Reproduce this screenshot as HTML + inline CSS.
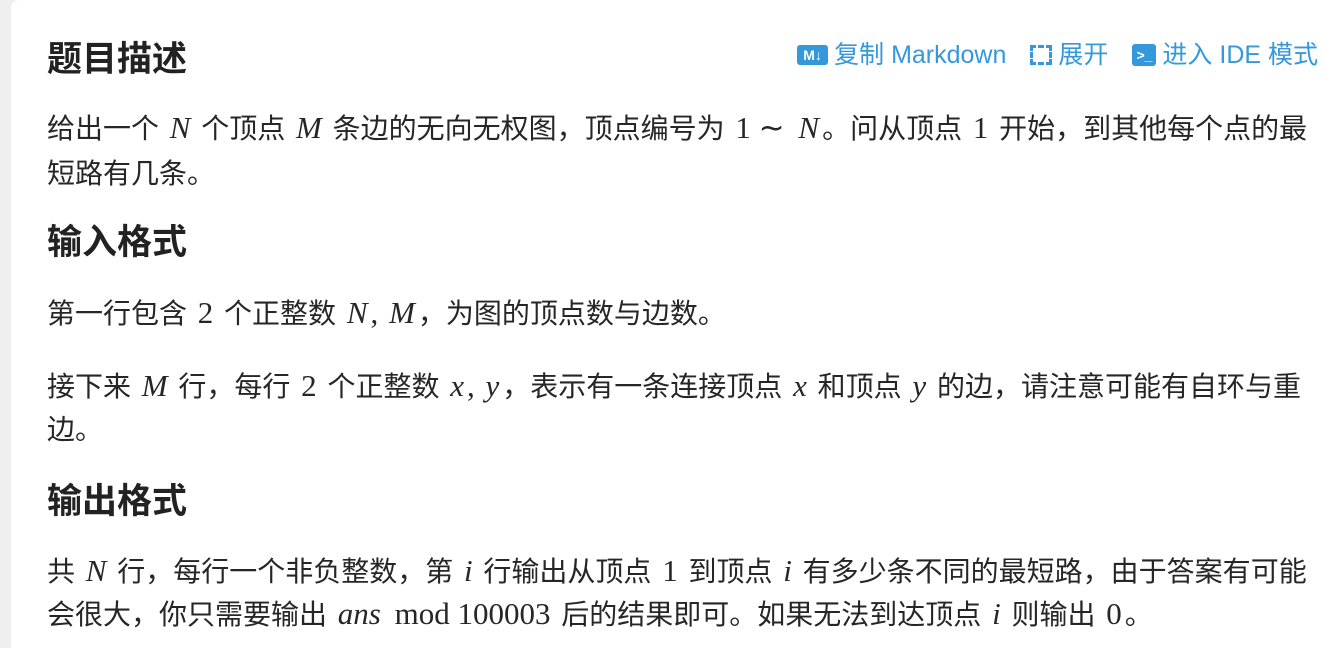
<!DOCTYPE html>
<html><head><meta charset="utf-8"><style>
html,body{margin:0;width:1324px;height:648px;overflow:hidden}
body{background:#efefef;font-family:"Liberation Sans","Noto Sans CJK SC",sans-serif;color:#262626;position:relative}
.card{position:absolute;left:11px;top:0;width:1313px;height:648px;background:#fff;border-radius:8px 0 0 0}
.l{position:absolute;left:47px;font-size:28px;white-space:nowrap;line-height:34px}
.h{position:absolute;left:47px;font-size:35px;font-weight:bold;line-height:40px;color:#222}
i,.m{font-family:"Liberation Serif",serif;font-size:31px;margin:0 3px}
.m{font-style:normal}
.tb{position:absolute;top:40px;right:6px;font-size:25px;color:#3498db;white-space:nowrap;line-height:30px;display:flex;align-items:center}
.tb span{margin-left:24px;display:inline-flex;align-items:center;gap:6px}
.ic{display:inline-block;width:31px;height:20px;background:#3498db;border-radius:3px;color:#fff;font-size:14px;font-weight:bold;text-align:center;line-height:20px}
</style></head><body>
<div class="card"></div>
<div class="h" style="top:40px">题目描述</div>
<div class="tb"><span><b class="ic">M↓</b>复制 Markdown</span><span><b style="display:inline-block;width:22px;height:20px;border:3px dashed #3498db;box-sizing:border-box"></b>展开</span><span><b class="ic" style="width:24px;height:22px;line-height:22px">&gt;_</b>进入 IDE 模式</span></div>
<div class="l" style="top:111px">给出一个 <i>N</i> 个顶点 <i>M</i> 条边的无向无权图，顶点编号为 <span class="m">1 ∼ </span><i>N</i>。问从顶点 <span class="m">1</span> 开始，到其他每个点的最</div>
<div class="l" style="top:157px">短路有几条。</div>
<div class="h" style="top:223px">输入格式</div>
<div class="l" style="top:296px">第一行包含 <span class="m">2</span> 个正整数 <i>N</i><span class="m" style="margin:0">,</span> <i>M</i>，为图的顶点数与边数。</div>
<div class="l" style="top:369px">接下来 <i>M</i> 行，每行 <span class="m">2</span> 个正整数 <i>x</i><span class="m" style="margin:0">,</span> <i>y</i>，表示有一条连接顶点 <i>x</i> 和顶点 <i>y</i> 的边，请注意可能有自环与重</div>
<div class="l" style="top:413px">边。</div>
<div class="h" style="top:482px">输出格式</div>
<div class="l" style="top:554px">共 <i>N</i> 行，每行一个非负整数，第 <i>i</i> 行输出从顶点 <span class="m">1</span> 到顶点 <i>i</i> 有多少条不同的最短路，由于答案有可能</div>
<div class="l" style="top:597px">会很大，你只需要输出 <i>ans</i> <span class="m">mod 100003</span> 后的结果即可。如果无法到达顶点 <i>i</i> 则输出 <span class="m">0</span>。</div>
</body></html>
